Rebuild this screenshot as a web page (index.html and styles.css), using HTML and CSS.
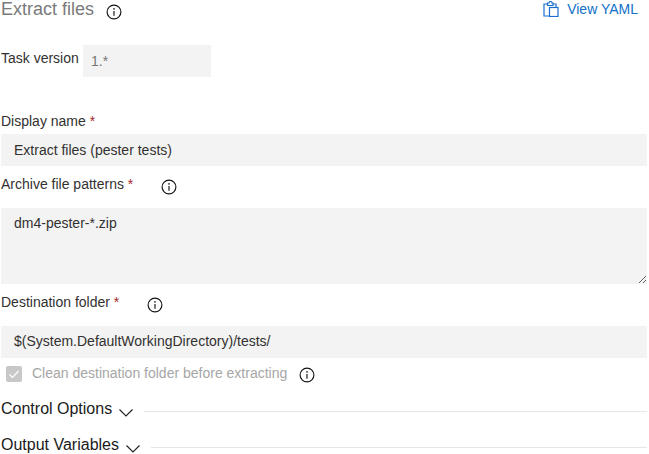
FILE: index.html
```html
<!DOCTYPE html>
<html lang="en">
<head>
<meta charset="utf-8">
<title>Extract files</title>
<link rel="stylesheet" href="styles.css">
</head>
<body>
<svg class="defs" width="0" height="0" aria-hidden="true">
  <symbol id="info" viewBox="0 0 16 16">
    <circle cx="8" cy="8" r="6.9" fill="none" stroke="#141414" stroke-width="1.15"/>
    <circle cx="8" cy="4.9" r="0.8" fill="#141414"/>
    <path d="M8 7v4.800" fill="none" stroke="#141414" stroke-width="1.150"/>
  </symbol>
</svg>
<main class="panel">
  <header class="head">
    <div class="title-wrap">
      <h1 class="title">Extract files</h1>
      <svg class="info info-title"><use href="#info"/></svg>
    </div>
    <a class="yaml" href="#">
      <svg class="clip" viewBox="0 0 16 16" fill="none" stroke="#1a6fd0" stroke-width="1.2">
        <path d="M4.500 3H1v12h5"/>
        <path d="M10 3h3v3"/>
        <path d="M4.500 4.500V2H6a1.500 1.500 0 0 1 3 0h1v2.500z"/>
        <rect x="6.500" y="6.500" width="8.500" height="9"/>
      </svg>
      <span>View YAML</span>
    </a>
  </header>

  <div class="version">
    <label class="version-label">Task version</label>
    <input class="field version-field" value="1.*" readonly>
  </div>

  <div class="label label-display">Display name <span class="req">*</span></div>
  <input class="field" value="Extract files (pester tests)" readonly>

  <div class="label label-archive">Archive file patterns <span class="req">*</span>
    <svg class="info info-archive"><use href="#info"/></svg>
  </div>
  <textarea class="field area" readonly>dm4-pester-*.zip</textarea>

  <div class="label label-dest">Destination folder <span class="req">*</span>
    <svg class="info info-dest"><use href="#info"/></svg>
  </div>
  <input class="field dest-field" value="$(System.DefaultWorkingDirectory)/tests/" readonly>

  <div class="check-row">
    <span class="check">
      <svg viewBox="0 0 16 16" fill="none" stroke="#fff" stroke-width="1.2"><path d="M3.500 8.500l3 3 6-6.500"/></svg>
    </span>
    <span class="check-text">Clean destination folder before extracting</span>
    <svg class="info info-check"><use href="#info"/></svg>
  </div>

  <section class="group group-control">
    <h2 class="group-title">Control Options</h2>
    <svg class="chev" viewBox="0 0 16 10" fill="none" stroke="#1f1f1f" stroke-width="1.1"><path d="M1.500 1.500L8 8l6.500-6.500"/></svg>
    <div class="rule"></div>
  </section>
  <section class="group group-output">
    <h2 class="group-title">Output Variables</h2>
    <svg class="chev" viewBox="0 0 16 10" fill="none" stroke="#1f1f1f" stroke-width="1.1"><path d="M1.500 1.500L8 8l6.500-6.500"/></svg>
    <div class="rule"></div>
  </section>
</main>
</body>
</html>
```
FILE: styles.css
```css
* { box-sizing: border-box; }
html, body { margin: 0; padding: 0; background: #fff; overflow: hidden; }
body { font-family: "Liberation Sans", Arial, sans-serif; font-size: 14px; color: #323130; }
.defs { position: absolute; }
.panel { width: 649px; padding-left: 1px; padding-right: 2px; display: flex; flex-direction: column; }
.panel > * { flex: none; }
.head { display: flex; justify-content: space-between; align-items: flex-start; height: 45px; }
.title-wrap { display: flex; align-items: flex-start; }
.title { margin: 0; font-size: 18px; font-weight: 400; line-height: 20px; color: #7a7a7a; height: 20px; margin-top: -1px; }
.info { width: 16px; height: 16px; flex: none; display: inline-block; }
.info-title { margin: 4px 0 0 12px; }
.yaml { display: flex; align-items: center; color: #1170c8; text-decoration: none; margin: 1px 9px 0 0; height: 16px; }
.clip { width: 16px; height: 16px; margin-right: 8px; }
.version { display: flex; align-items: flex-start; height: 32px; }
.version-label { line-height: 16px; margin-top: 5px; width: 82px; }
.field { display: block; width: 100%; height: 32px; border: 0; outline: 0; background: #f3f3f3; color: #323130; font: 14px "Liberation Sans", Arial, sans-serif; padding: 0 13px; margin: 0; }
.version-field { width: 128px; padding: 0 8px; color: #777; }
.dest-field { padding-bottom: 2px; }
.label { line-height: 16px; height: 16px; display: flex; align-items: center; white-space: pre; }
.req { color: #a4262c; }
.label-display { margin-top: 36px; margin-bottom: 5px; }
.label-archive { margin-top: 10px; margin-bottom: 16px; }
.label-dest { margin-top: 10px; margin-bottom: 16px; }
.info-archive { margin: 6px 0 0 28px; }
.info-dest { margin: 6px 0 0 28px; }
.area { height: 76px; padding: 7px 13px; resize: vertical; line-height: 16px; }
.check-row { display: flex; align-items: center; margin-top: 8px; height: 16px; }
.check { width: 16px; height: 16px; margin-left: 5px; border-radius: 2px; background: #c8c8c8; display: flex; }
.check svg { width: 16px; height: 16px; }
.check-text { margin: -2px 0 0 10px; color: #a6a6a6; }
.info-check { margin: 2px 0 0 12px; }
.group { display: flex; align-items: center; height: 20px; position: relative; }
.group-control { margin-top: 16px; }
.group-output { margin-top: 16px; }
.group-title { margin: 2px 0 0; font-size: 16px; font-weight: 400; color: #1a1a1a; line-height: 20px; }
.chev { width: 16px; height: 10px; margin: 9px 0 0 6px; flex: none; }
.rule { flex: 1; height: 1px; background: #e6e6e6; margin: 7px 0 0 10px; }
```
